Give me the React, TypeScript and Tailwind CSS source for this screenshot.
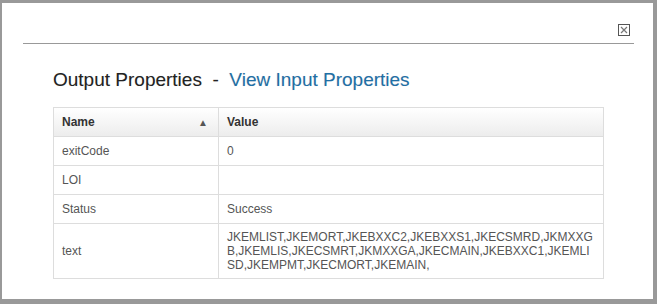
const rows = [
  { name: "exitCode", value: "0" },
  { name: "LOI", value: "" },
  { name: "Status", value: "Success" },
  {
    name: "text",
    value:
      "JKEMLIST,JKEMORT,JKEBXXC2,JKEBXXS1,JKECSMRD,JKMXXGB,JKEMLIS,JKECSMRT,JKMXXGA,JKECMAIN,JKEBXXC1,JKEMLISD,JKEMPMT,JKECMORT,JKEMAIN,",
  },
];

function CloseIcon() {
  return (
    <svg width="12" height="12" viewBox="0 0 12 12" className="block">
      <rect x="0.5" y="0.5" width="11" height="11" fill="#fff" stroke="#555" />
      <path d="M3 3 L9 9 M9 3 L3 9" stroke="#777" strokeWidth="1.2" />
    </svg>
  );
}

export default function App() {
  return (
    <div className="h-[304px] w-[657px] bg-white font-['Liberation_Sans',Arial,sans-serif]">
      <div className="flex h-full w-full flex-col border-t-[3px] border-r-[4px] border-b-[5px] border-l-[2px] border-[#999] bg-white">
        <div className="mx-[21px] mr-[19px] flex h-[41px] items-end justify-end border-b border-[#999] pb-[7px] pr-[4px]">
          <CloseIcon />
        </div>
        <div className="pl-[51px] pr-[49px]">
          <h1 className="mt-[24px] text-[19px] leading-[24px] text-[#222] [text-shadow:0_0_1px_rgba(0,0,0,0.15)]">
            Output Properties&nbsp;&nbsp;-&nbsp;&nbsp;
            <a className="text-[#1f6fa6]">View Input Properties</a>
          </h1>
          <table className="mt-[15px] w-full border-collapse text-[12px] text-[#555]">
            <thead>
              <tr className="h-[29px] bg-gradient-to-b from-white to-[#ececec]">
                <th className="w-[165px] border border-[#ddd] px-[8px] text-left font-bold text-[#333]">
                  <div className="flex items-center justify-between">
                    <span>Name</span>
                    <span className="mr-[2px] text-[10px] text-[#555]">▲</span>
                  </div>
                </th>
                <th className="border border-[#ddd] px-[8px] text-left font-bold text-[#333]">
                  Value
                </th>
              </tr>
            </thead>
            <tbody>
              {rows.map((r) => (
                <tr key={r.name} className="h-[29px]">
                  <td className="border border-[#ddd] px-[8px] align-middle">
                    {r.name}
                  </td>
                  <td className="border border-[#ddd] px-[8px] py-[6px] align-middle leading-[14px] break-all">
                    {r.value}
                  </td>
                </tr>
              ))}
            </tbody>
          </table>
        </div>
      </div>
    </div>
  );
}
